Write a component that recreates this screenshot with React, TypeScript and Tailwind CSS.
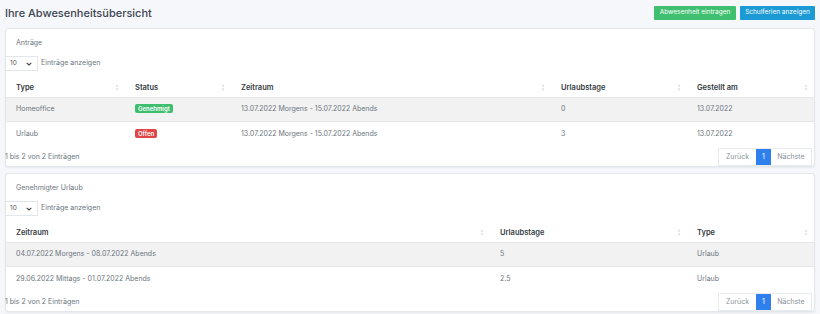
import React from "react";

const font = { fontFamily: "Inter, 'Noto Sans', sans-serif" };

function SortIcon() {
  return (
    <svg width="4" height="7" viewBox="0 0 4 7" className="shrink-0">
      <path d="M2 0.5 L3.5 2.5 H0.5 Z" fill="#d4d7dc" />
      <path d="M2 6.5 L3.5 4.5 H0.5 Z" fill="#d4d7dc" />
    </svg>
  );
}

function SelectBox() {
  return (
    <div className="flex items-center gap-[3px]">
      <div className="w-[33px] h-[15px] border border-[#e3e6ea] bg-white flex items-center justify-between pl-[4px] pr-[5px]">
        <span className="text-[6.5px] text-[#555]">10</span>
        <svg width="6" height="4" viewBox="0 0 6 4">
          <path d="M0.7 0.8 L3 3 L5.3 0.8" stroke="#444" strokeWidth="1.1" fill="none" />
        </svg>
      </div>
      <span className="text-[7px] text-[#6c757d]">Einträge anzeigen</span>
    </div>
  );
}

function Pagination() {
  return (
    <div className="flex h-[18px] border border-[#e9ecef] bg-white text-[7px] text-[#8a929a]">
      <div className="w-[37px] flex items-center justify-center">Zurück</div>
      <div className="w-[15px] flex items-center justify-center bg-[#2f80ed] text-white">1</div>
      <div className="w-[40px] flex items-center justify-center">Nächste</div>
    </div>
  );
}

type Col = { label: string; width: number };

function Table({ cols, rows }: { cols: Col[]; rows: React.ReactNode[][] }) {
  return (
    <div className="flex flex-col">
      <div className="flex h-[20px] items-center border-b border-[#e5e7eb]">
        {cols.map((c, i) => (
          <div key={i} style={{ width: c.width }} className="flex items-center justify-between pl-[10px] pr-[6px] shrink-0">
            <span className="text-[7.5px] font-semibold text-[#343a40]">{c.label}</span>
            <SortIcon />
          </div>
        ))}
      </div>
      {rows.map((r, ri) => (
        <div key={ri} className={`flex h-[24px] items-center ${ri === 0 ? "bg-[#f2f2f2] border-b border-[#e5e7eb]" : "bg-white"}`}>
          {r.map((cell, ci) => (
            <div key={ci} style={{ width: cols[ci].width }} className="pl-[10px] shrink-0 text-[7px] text-[#6c757d]">
              {cell}
            </div>
          ))}
        </div>
      ))}
    </div>
  );
}

function Badge({ color, children }: { color: string; children: React.ReactNode }) {
  return (
    <span className={`inline-flex items-center h-[9px] px-[3px] rounded-[2px] text-[6px] font-semibold text-white ${color}`}>
      {children}
    </span>
  );
}

function Card({ title, children }: { title: string; children: React.ReactNode }) {
  return (
    <div className="bg-white border border-[#e3e6ea] rounded-[3px] shadow-[0_1px_2px_rgba(0,0,0,0.06)] flex flex-col">
      <div className="pl-[10px] pt-[9px] h-[27px] text-[7px] text-[#6c757d]">{title}</div>
      <div className="-ml-px">
        <SelectBox />
      </div>
      <div className="mt-[7px]">{children}</div>
    </div>
  );
}

function Footer() {
  return (
    <div className="flex items-end justify-between h-[20px] pr-[2px] -ml-px">
      <span className="text-[7px] text-[#6c757d] mb-[4px]">1 bis 2 von 2 Einträgen</span>
      <Pagination />
    </div>
  );
}

export default function App() {
  const cols1: Col[] = [
    { label: "Type", width: 119 },
    { label: "Status", width: 106 },
    { label: "Zeitraum", width: 320 },
    { label: "Urlaubstage", width: 136 },
    { label: "Gestellt am", width: 127 },
  ];
  const rows1 = [
    ["Homeoffice", <Badge color="bg-[#3dbd6e]">Genehmigt</Badge>, "13.07.2022 Morgens - 15.07.2022 Abends", "0", "13.07.2022"],
    ["Urlaub", <Badge color="bg-[#e04646]">Offen</Badge>, "13.07.2022 Morgens - 15.07.2022 Abends", "3", "13.07.2022"],
  ];
  const cols2: Col[] = [
    { label: "Zeitraum", width: 484 },
    { label: "Urlaubstage", width: 197 },
    { label: "Type", width: 127 },
  ];
  const rows2 = [
    ["04.07.2022 Morgens - 08.07.2022 Abends", "5", "Urlaub"],
    ["29.06.2022 Mittags - 01.07.2022 Abends", "2.5", "Urlaub"],
  ];
  return (
    <div style={font} className="w-[820px] h-[314px] bg-[#f5f7fb] px-[5px] pt-[6px] overflow-hidden">
      <div className="flex items-start justify-between h-[22px]">
        <h1 className="text-[11px] font-medium text-[#3d4451] leading-none pt-[2px]">Ihre Abwesenheitsübersicht</h1>
        <div className="flex gap-[4px]">
          <button className="w-[82px] h-[14px] bg-[#3fbf70] text-white text-[6.5px] rounded-[1px]">Abwesenheit eintragen</button>
          <button className="w-[75px] h-[14px] bg-[#1b9ad6] text-white text-[6.5px] rounded-[1px]">Schulferien anzeigen</button>
        </div>
      </div>
      <div className="flex flex-col gap-[6px]">
        <Card title="Anträge">
          <Table cols={cols1} rows={rows1} />
          <Footer />
        </Card>
        <Card title="Genehmigter Urlaub">
          <Table cols={cols2} rows={rows2} />
          <Footer />
        </Card>
      </div>
    </div>
  );
}
